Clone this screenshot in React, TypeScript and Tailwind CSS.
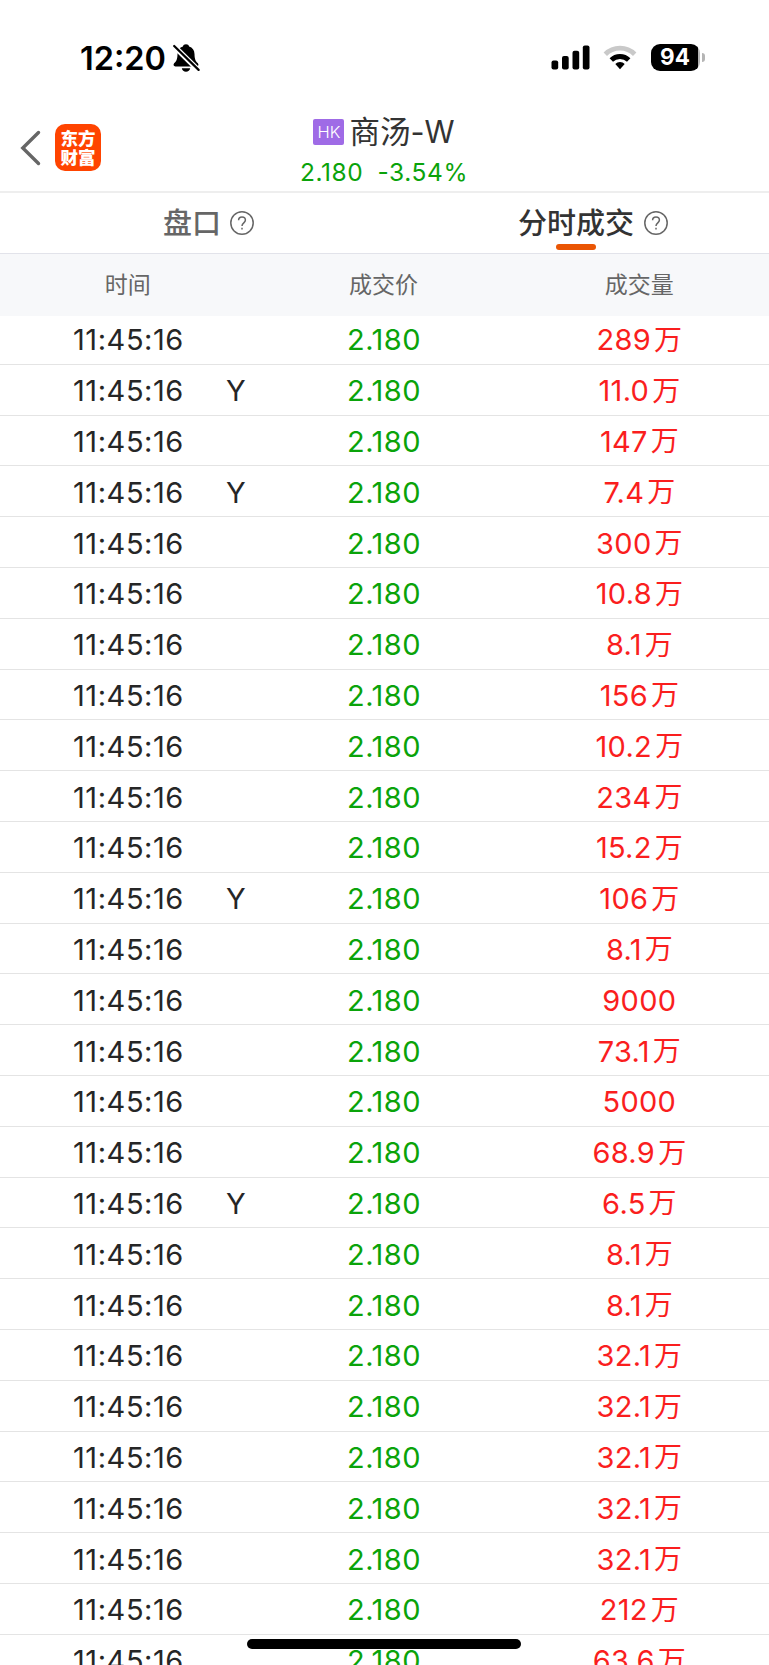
type Trade = { volume: string; unit?: string; flag?: string }

const trades: Trade[] = [
  { volume: '289', unit: '万' },
  { volume: '11.0', unit: '万', flag: 'Y' },
  { volume: '147', unit: '万' },
  { volume: '7.4', unit: '万', flag: 'Y' },
  { volume: '300', unit: '万' },
  { volume: '10.8', unit: '万' },
  { volume: '8.1', unit: '万' },
  { volume: '156', unit: '万' },
  { volume: '10.2', unit: '万' },
  { volume: '234', unit: '万' },
  { volume: '15.2', unit: '万' },
  { volume: '106', unit: '万', flag: 'Y' },
  { volume: '8.1', unit: '万' },
  { volume: '9000' },
  { volume: '73.1', unit: '万' },
  { volume: '5000' },
  { volume: '68.9', unit: '万' },
  { volume: '6.5', unit: '万', flag: 'Y' },
  { volume: '8.1', unit: '万' },
  { volume: '8.1', unit: '万' },
  { volume: '32.1', unit: '万' },
  { volume: '32.1', unit: '万' },
  { volume: '32.1', unit: '万' },
  { volume: '32.1', unit: '万' },
  { volume: '32.1', unit: '万' },
  { volume: '212', unit: '万' },
  { volume: '63.6', unit: '万' },
]

function BellOff() {
  return (
    <svg width="28" height="30" viewBox="0 0 28 30">
      <path
        d="M14 1.2c-1.6 0-2.8.9-3.1 2.3-3.4 1-5.3 3.8-5.4 7.4-.1 5.6-1.3 7.2-3.2 9.2-1.4 1.5-.8 3.3 1.1 3.3h21.2c1.9 0 2.5-1.8 1.1-3.3-1.9-2-3.1-3.6-3.2-9.2-.1-3.6-2-6.4-5.4-7.4-.3-1.4-1.5-2.3-3.1-2.3zM9.800 25.200h8.400c-.4 2-2.100 3.500-4.200 3.500s-3.800-1.500-4.200-3.500z"
        fill="#000"
      />
      <path d="M.6 1.800 27.400 28.100" stroke="#fff" strokeWidth="5.400" />
      <path d="M2.200 3 26.600 26.900" stroke="#000" strokeWidth="2.200" strokeLinecap="round" />
    </svg>
  )
}

function StatusBar() {
  return (
    <div className="flex h-[115px] shrink-0 items-start justify-between pl-[80px] pr-[65px] pt-[42px]">
      <div className="flex h-[31px] items-center gap-[6px]">
        <span className="pt-px text-[32.5px] font-semibold leading-[31px] text-black">12:20</span>
        <BellOff />
      </div>
      <div className="flex h-[31px] items-center">
        <svg width="39" height="25" viewBox="0 0 39 25">
          <rect x="0.500" y="15.500" width="6.700" height="9" rx="2" />
          <rect x="11" y="11" width="6.700" height="13.500" rx="2" />
          <rect x="21.500" y="5.800" width="6.700" height="18.700" rx="2" />
          <rect x="31.800" y="0.500" width="6.700" height="24" rx="2" />
        </svg>
        <svg className="ml-[13px]" width="34" height="25" viewBox="0 0 34 25">
          <path d="M.6 7.600Q7.300.8 17 .8t16.400 6.800l-3.400 3.500Q24.700 5.600 17 5.600T4 11.100z" fill="#c9c9c9" />
          <path d="M6.600 13.300Q10.800 8.900 17 8.900t10.400 4.400L24 16.800Q21.200 13.900 17 13.900t-7 2.900z" />
          <path d="M12.300 19.100Q14.200 17.100 17 17.100t4.700 2L17 24.200z" />
        </svg>
        <div className="ml-[14px] flex h-[27px] w-[49px] items-center justify-center overflow-hidden rounded-[9px] bg-[linear-gradient(to_right,#000_46.5px,#b5b5b5_46.5px)] pr-px text-[22.5px] font-bold leading-none text-white">
          94
        </div>
        <div className="-mr-px ml-[2px] h-[9px] w-[3px] rounded-r-full bg-[#b5b5b5]" />
      </div>
    </div>
  )
}

function Header() {
  return (
    <div className="flex h-[78px] shrink-0 border-b-2 border-[#eeeeee]">
      <div className="flex w-[256px] items-start pl-[20px] pt-[9px]">
        <svg className="mt-[6px]" width="21" height="36" viewBox="0 0 21 36">
          <path d="M18.500 2.500 2.800 18 18.500 33.500" fill="none" stroke="#666" strokeWidth="3.400" strokeLinecap="round" />
        </svg>
        <div className="ml-[14px] flex h-[47px] w-[46px] flex-col items-center justify-center rounded-[10px] bg-[#ff4400] text-[17.5px] font-black leading-[19px] text-white">
          <span>东方</span>
          <span>财富</span>
        </div>
      </div>
      <div className="flex flex-1 flex-col items-center">
        <div className="flex h-[34px] items-center gap-[5px]">
          <span className="flex h-[26px] w-[31px] items-center justify-center rounded-[2px] bg-[#9f6be6] text-[16.5px] font-light leading-none text-white">
            HK
          </span>
          <span className="-mt-px text-[30.5px] leading-[34px] text-[#333333]">商汤-W</span>
        </div>
        <div className="mt-[7px] flex gap-[14px] text-[24.5px] leading-[32px] tracking-[0.6px] text-[#0aa30a]">
          <span>2.180</span>
          <span>-3.54%</span>
        </div>
      </div>
      <div className="w-[257px]" />
    </div>
  )
}

function Help() {
  return (
    <svg width="24" height="24" viewBox="0 0 24 24" fill="none" stroke="#666" strokeWidth="1.500">
      <circle cx="12" cy="12" r="11.200" />
      <path d="M8.600 9.300c0-2 1.400-3.300 3.400-3.300s3.400 1.300 3.400 3.100c0 2.700-3.400 2.800-3.400 5.900" />
      <path d="M12 16.800v1.800" />
    </svg>
  )
}

function Tabs() {
  return (
    <div className="grid h-[61px] shrink-0 grid-cols-[418px_351px] border-b border-[#e2e3ea]">
      <div className="flex items-center gap-[9px] pl-[163px]">
        <span className="pt-px text-[29px] font-medium leading-none text-[#666666]">盘口</span>
        <Help />
      </div>
      <div className="relative flex items-center gap-[10px] pl-[100px]">
        <span className="pt-px text-[29px] font-medium leading-none text-[#333333]">分时成交</span>
        <Help />
        <div className="absolute bottom-[3px] left-[138px] h-[6px] w-[40px] rounded-full bg-[#ea5504]" />
      </div>
    </div>
  )
}

function TradeRow({ trade }: { trade: Trade }) {
  return (
    <div className="grid h-[50.8px] shrink-0 grid-cols-3 items-center border-b border-[#e4e4e4] pt-[2px] text-[29px] leading-none">
      <div className="flex items-center pl-[73px] text-[#262626]">
        <span className="w-[153px] tracking-[0.55px]">11:45:16</span>
        {trade.flag && <span>{trade.flag}</span>}
      </div>
      <div className="pr-px text-center tracking-[0.5px] text-[#0aa30a]">2.180</div>
      <div className="flex items-center justify-center gap-[3px] pr-[3px] text-[#fa1e1e]">
        <span className="tracking-[0.3px]">{trade.volume}</span>
        {trade.unit && <span className="text-[28px]">{trade.unit}</span>}
      </div>
    </div>
  )
}

export default function App() {
  return (
    <div
      lang="zh-CN"
      className="relative flex h-[1665px] w-[769px] flex-col overflow-hidden bg-white font-['Inter','Noto_Sans_CJK_SC',sans-serif]"
    >
      <StatusBar />
      <Header />
      <Tabs />
      <div className="z-10 grid h-[62px] shrink-0 grid-cols-3 items-center bg-[#f7f8fa] pr-[2px] pt-px text-center text-[23px] leading-none text-[#666666]">
        <span>时间</span>
        <span>成交价</span>
        <span>成交量</span>
      </div>
      <div className="-mt-[2px] flex flex-col">
        {trades.map((trade, i) => (
          <TradeRow key={i} trade={trade} />
        ))}
      </div>
      <div className="absolute bottom-[16px] left-[247px] h-[10px] w-[274px] rounded-full bg-black" />
    </div>
  )
}
